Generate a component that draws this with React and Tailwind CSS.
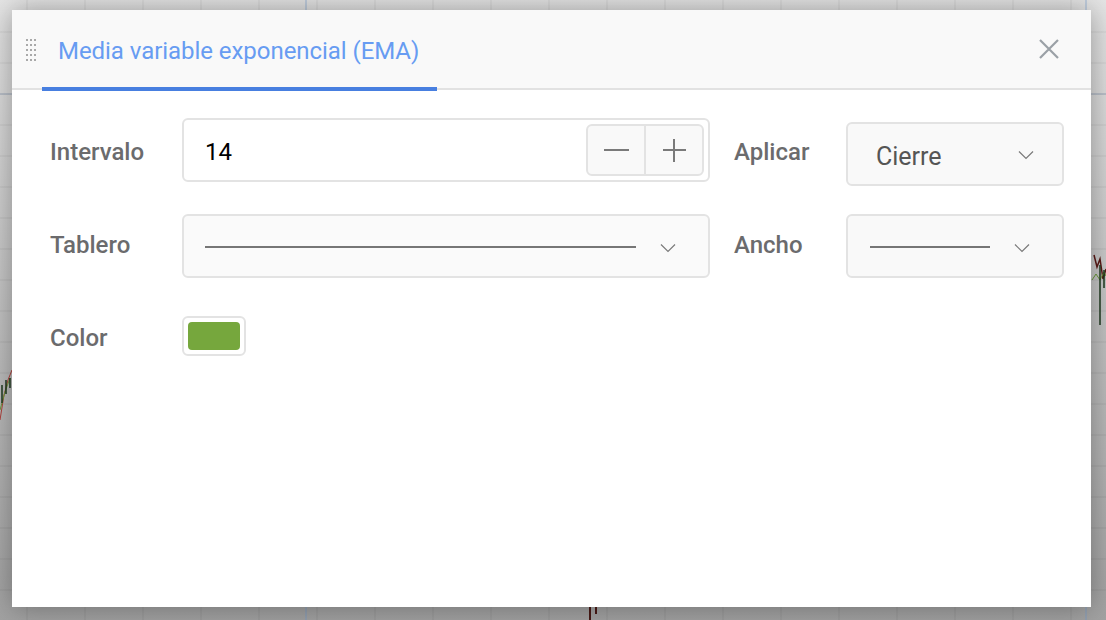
import React from 'react';

const vLines = Array.from({ length: 19 }, (_, i) => 27 + i * 58);
const hLines = Array.from({ length: 20 }, (_, i) => 32 + i * 31);

function ChartBackdrop() {
  return (
    <svg className="absolute inset-0" width="1106" height="620" viewBox="0 0 1106 620">
      <defs>
        <linearGradient id="dim" x1="0" y1="0" x2="0" y2="1">
          <stop offset="0" stopColor="#e6e6e6" />
          <stop offset="1" stopColor="#a2a2a2" />
        </linearGradient>
      </defs>
      <rect width="1106" height="620" fill="url(#dim)" />
      {vLines.map((x) => (
        <line key={x} x1={x} y1="0" x2={x} y2="620" stroke="#000" strokeOpacity="0.07" />
      ))}
      {hLines.map((y) => (
        <line key={y} x1="0" y1={y} x2="1106" y2={y} stroke="#000" strokeOpacity="0.07" />
      ))}
      <line x1="0" y1="94" x2="1106" y2="94" stroke="#7f93b0" strokeOpacity="0.6" />
      <line x1="306" y1="0" x2="306" y2="620" stroke="#6f9bd0" strokeOpacity="0.6" />
      <line x1="1086" y1="0" x2="1086" y2="620" stroke="#6f9bd0" strokeOpacity="0.6" />
      {/* bits of candles peeking out */}
      <path d="M0 420 L4 395 L8 380 L12 370" stroke="#b0423d" fill="none" />
      <path d="M0 410 L5 392 L10 378" stroke="#6a9a3a" fill="none" />
      <path d="M2 385 v18 M6 380 v14 M10 378 v10" stroke="#1f3a1f" strokeWidth="1.5" />
      <path d="M1094 255 l3 12 l3 -8 l3 20 l3 -10" stroke="#5a1a16" fill="none" strokeWidth="1.5" />
      <path d="M1092 280 l4 -6 l4 6 l4 -8 l2 4" stroke="#6a9a3a" fill="none" />
      <path d="M1100 265 v60 M1104 270 v18" stroke="#1f3a1f" strokeWidth="1.5" />
      <path d="M590 606 v14 M596 606 v8" stroke="#4a1a16" strokeWidth="2" />
    </svg>
  );
}

function Chevron() {
  return (
    <svg width="16" height="10" viewBox="0 0 16 10" fill="none">
      <path d="M1 1.5 L8 8.5 L15 1.5" stroke="#7a7a7a" strokeWidth="1.2" />
    </svg>
  );
}

function DragHandle() {
  return (
    <div className="grid grid-cols-3 gap-x-[2px] gap-y-[3px]">
      {Array.from({ length: 15 }).map((_, i) => (
        <span key={i} className="block w-[2px] h-[2px] bg-[#a9a9a9]" />
      ))}
    </div>
  );
}

function Label({ children, lift }) {
  return (
    <div className={`text-[24px] font-medium text-[#6b6b6d] leading-none ${lift ? 'pb-[3px]' : 'pt-[3px]'}`}>
      {children}
    </div>
  );
}

export default function App() {
  return (
    <div className="relative w-[1106px] h-[620px] overflow-hidden font-['Roboto','Liberation_Sans',sans-serif]">
      <ChartBackdrop />
      <div className="relative pt-[10px] pl-[12px]">
        <div className="w-[1079px] h-[597px] bg-white shadow-[0_0_28px_rgba(0,0,0,0.35)] flex flex-col">
          {/* header */}
          <div className="h-[80px] bg-[#f9f9f9] border-b-2 border-[#e2e2e2] flex items-stretch pl-[14px] pr-[32px] relative">
            <div className="flex items-center pr-[22px] pt-[1px]">
              <DragHandle />
            </div>
            <div className="relative flex items-center px-[16px] -ml-[16px] pt-[3px]">
              <span className="text-[24px] text-[#679cf2] tracking-[-0.05px]">Media variable exponencial (EMA)</span>
              <span className="absolute left-0 w-[395px] bottom-[-3px] h-[4px] bg-[#487fe0]" />
            </div>
            <div className="flex-1" />
            <button className="flex items-center text-[#9aa0a6]">
              <svg width="20" height="20" viewBox="0 0 20 20" fill="none">
                <path d="M1 1 L19 19 M19 1 L1 19" stroke="currentColor" strokeWidth="2.2" />
              </svg>
            </button>
          </div>

          {/* body */}
          <div className="pl-[38px] pr-[27px] pt-[28px] flex flex-col gap-[32px]">
            <div className="flex items-center h-[64px]">
              <div className="w-[132px]"><Label>Intervalo</Label></div>
              <div className="w-[528px] h-[64px] border-2 border-[#e3e3e3] rounded-[6px] bg-white flex items-center pl-[21px] pr-[4px]">
                <span className="text-[24px] text-black flex-1 pt-[3px]">14</span>
                <div className="h-[52px] w-[118px] border-2 border-[#e3e3e3] rounded-[6px] bg-[#f9f9f9] flex">
                  <div className="flex-1 flex items-center justify-center border-r-2 border-[#e3e3e3]">
                    <span className="block w-[25px] h-[2px] bg-[#7a7a7a]" />
                  </div>
                  <div className="flex-1 flex items-center justify-center relative">
                    <span className="block w-[23px] h-[2px] bg-[#7a7a7a]" />
                    <span className="absolute block w-[2px] h-[23px] bg-[#7a7a7a]" />
                  </div>
                </div>
              </div>
              <div className="w-[24px]" />
              <div className="w-[112px]"><Label>Aplicar</Label></div>
              <div className="w-[218px] h-[64px] mt-[8px] border-2 border-[#e3e3e3] rounded-[6px] bg-[#f9f9f9] flex items-center pl-[28px] pr-[28px]">
                <span className="text-[25px] text-[#555] flex-1 pt-[6px]">Cierre</span>
                <div className="pt-[2px]"><Chevron /></div>
              </div>
            </div>

            <div className="flex items-center h-[64px]">
              <div className="w-[132px]"><Label lift>Tablero</Label></div>
              <div className="w-[528px] h-[64px] border-2 border-[#e3e3e3] rounded-[6px] bg-[#fafafa] flex items-center pl-[21px] pr-[32px]">
                <span className="block w-[431px] h-[2px] bg-[#767676] mt-[2px]" />
                <div className="flex-1" />
                <div className="mt-[4px]"><Chevron /></div>
              </div>
              <div className="w-[24px]" />
              <div className="w-[112px]"><Label lift>Ancho</Label></div>
              <div className="w-[218px] h-[64px] border-2 border-[#e3e3e3] rounded-[6px] bg-[#f9f9f9] flex items-center pl-[22px] pr-[32px]">
                <span className="block w-[120px] h-[2px] bg-[#767676] mt-[2px]" />
                <div className="flex-1" />
                <div className="mt-[4px]"><Chevron /></div>
              </div>
            </div>

            <div className="flex items-center mt-[6px]">
              <div className="w-[132px]"><Label>Color</Label></div>
              <div className="w-[64px] h-[40px] border-2 border-[#e3e3e3] rounded-[6px] bg-white p-[4px]">
                <div className="w-full h-full rounded-[4px] bg-[#76a73d]" />
              </div>
            </div>
          </div>
        </div>
      </div>
    </div>
  );
}
